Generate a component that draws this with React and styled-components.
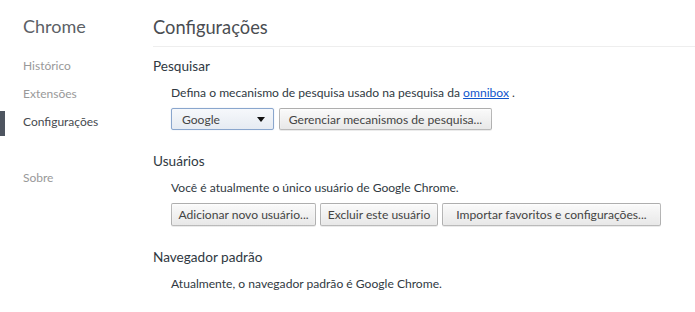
import React from "react";
import styled, { createGlobalStyle } from "styled-components";

const GlobalStyle = createGlobalStyle`
  html, body {
    margin: 0;
    padding: 0;
    background: #fff;
  }
  body {
    font-family: Lato, "Open Sans", sans-serif;
    color: #303942;
  }
`;

const Page = styled.div`
  display: flex;
  width: 695px;
  height: 312px;
  overflow: hidden;
`;

const Sidebar = styled.nav`
  width: 153px;
  flex-shrink: 0;
  display: flex;
  flex-direction: column;
`;

const Brand = styled.div`
  height: 46px;
  padding: 13px 0 0 23px;
  box-sizing: border-box;
  font-size: 18px;
  line-height: 26px;
  color: #5c6166;
`;

const NavList = styled.ul`
  list-style: none;
  margin: 6px 0 0;
  padding: 0;
`;

const NavItem = styled.li`
  position: relative;
  height: 28px;
  line-height: 28px;
  padding-left: 23px;
  font-size: 12px;
  color: ${(p) => (p.active ? "#464a4f" : "#999")};
  margin-top: ${(p) => (p.separated ? "28px" : "0")};

  &::before {
    content: "";
    display: ${(p) => (p.active ? "block" : "none")};
    position: absolute;
    left: 0;
    top: 3px;
    bottom: 0;
    width: 5px;
    background: #4e5560;
  }
`;

const Main = styled.main`
  flex: 1;
  display: flex;
  flex-direction: column;
`;

const Header = styled.header`
  height: 47px;
  box-sizing: border-box;
  padding-top: 14px;
  border-bottom: 1px solid #eeeeee;
`;

const Title = styled.h1`
  margin: 0;
  font-size: 18.3px;
  line-height: 26px;
  font-weight: 400;
  color: #4a4d52;
`;

const Sections = styled.div`
  padding-top: 9px;
  display: flex;
  flex-direction: column;
  gap: 21px;
`;

const Section = styled.section`
  display: flex;
  flex-direction: column;
`;

const SectionTitle = styled.h3`
  margin: 0;
  font-size: 13.6px;
  line-height: 20px;
  font-weight: 400;
  color: #303942;
`;

const SectionBody = styled.div`
  padding-left: 18px;
  margin-top: 7px;
  display: flex;
  flex-direction: column;
  gap: 5px;
`;

const Text = styled.div`
  font-size: 12.1px;
  line-height: 20px;
  color: #303942;
`;

const Link = styled.a`
  color: #15c;
  text-decoration: underline;
  cursor: pointer;
`;

const Controls = styled.div`
  display: flex;
  gap: 4px;
`;

const Button = styled.button`
  height: ${(p) => p.h || 22}px;
  width: ${(p) => p.w}px;
  padding: 0;
  white-space: nowrap;
  font-family: inherit;
  font-size: 12.1px;
  color: #444;
  background: linear-gradient(#fafafa, #e8e8e8);
  border: 1px solid rgba(0, 0, 0, 0.25);
  border-radius: 2px;
  box-shadow: 0 1px 0 rgba(0, 0, 0, 0.08), inset 0 1px 2px rgba(255, 255, 255, 0.75);
  cursor: pointer;
`;

const Select = styled.div`
  width: 103px;
  height: 22px;
  box-sizing: border-box;
  display: flex;
  align-items: center;
  justify-content: space-between;
  padding: 0 8px 0 10px;
  font-size: 12.1px;
  color: #444;
  background: linear-gradient(#f6f8fb, #e6ebf2);
  border: 1px solid #8aa6cd;
  border-radius: 2px;
  box-shadow: 0 0 1px rgba(104, 153, 208, 0.5);
  margin-right: 1px;
`;

const Caret = styled.span`
  width: 0;
  height: 0;
  border-left: 4px solid transparent;
  border-right: 4px solid transparent;
  border-top: 5px solid #111;
`;

export default function App() {
  return (
    <Page>
      <GlobalStyle />
      <Sidebar>
        <Brand>Chrome</Brand>
        <NavList>
          <NavItem>Histórico</NavItem>
          <NavItem>Extensões</NavItem>
          <NavItem active>Configurações</NavItem>
          <NavItem separated>Sobre</NavItem>
        </NavList>
      </Sidebar>
      <Main>
        <Header>
          <Title>Configurações</Title>
        </Header>
        <Sections>
          <Section>
            <SectionTitle>Pesquisar</SectionTitle>
            <SectionBody>
              <Text>
                Defina o mecanismo de pesquisa usado na pesquisa da{" "}
                <Link>omnibox</Link> .
              </Text>
              <Controls>
                <Select>
                  <span>Google</span>
                  <Caret />
                </Select>
                <Button w={213}>Gerenciar mecanismos de pesquisa...</Button>
              </Controls>
            </SectionBody>
          </Section>
          <Section>
            <SectionTitle>Usuários</SectionTitle>
            <SectionBody>
              <Text>Você é atualmente o único usuário de Google Chrome.</Text>
              <Controls>
                <Button h={23} w={145}>Adicionar novo usuário...</Button>
                <Button h={23} w={118}>Excluir este usuário</Button>
                <Button h={23} w={219}>Importar favoritos e configurações...</Button>
              </Controls>
            </SectionBody>
          </Section>
          <Section>
            <SectionTitle>Navegador padrão</SectionTitle>
            <SectionBody>
              <Text>Atualmente, o navegador padrão é Google Chrome.</Text>
            </SectionBody>
          </Section>
        </Sections>
      </Main>
    </Page>
  );
}
